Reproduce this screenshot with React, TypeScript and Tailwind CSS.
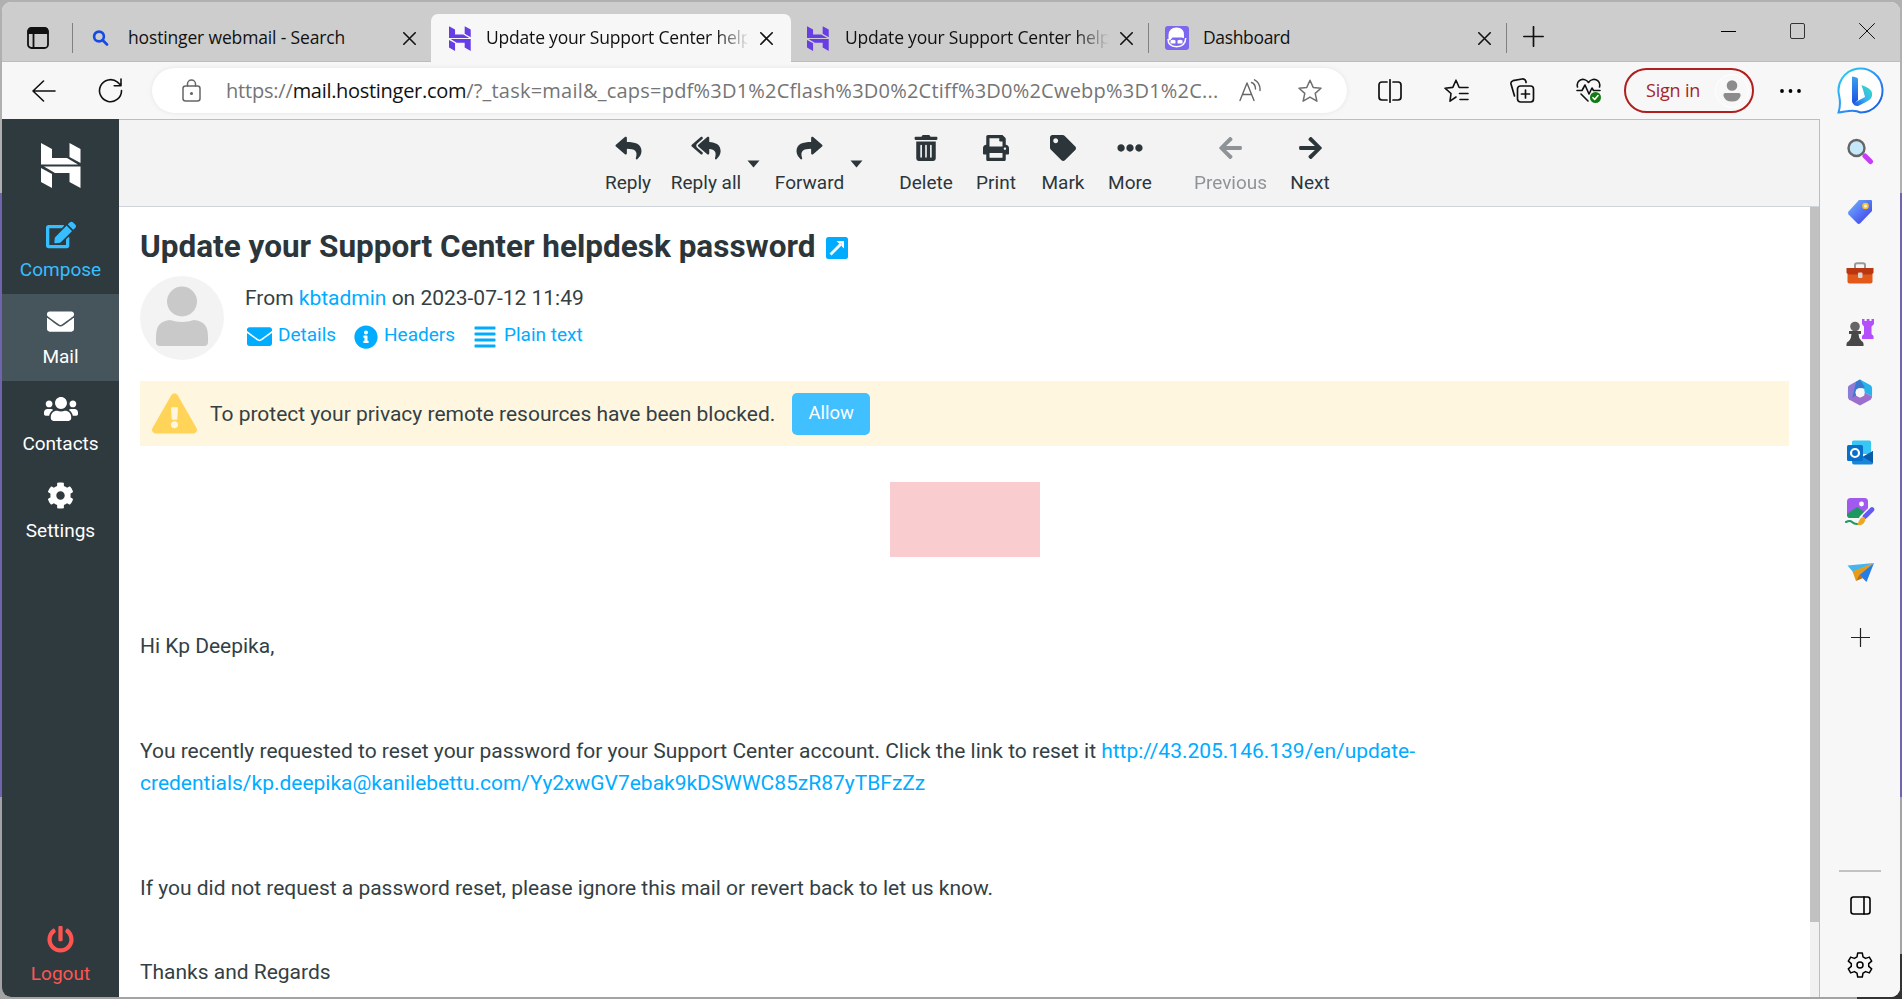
import type { ReactNode } from 'react'
import {
  FaAlignJustify,
  FaArrowLeft,
  FaArrowRight,
  FaCog,
  FaEdit,
  FaEllipsisH,
  FaEnvelope,
  FaExclamationTriangle,
  FaInfoCircle,
  FaPowerOff,
  FaPrint,
  FaReply,
  FaReplyAll,
  FaShare,
  FaTag,
  FaTrashAlt,
  FaUsers,
} from 'react-icons/fa'

type LineProps = { className: string; viewBox: string; width?: number; children: ReactNode }

function Line({ className, viewBox, width = 1.5, children }: LineProps) {
  return (
    <svg
      className={`shrink-0 ${className}`}
      viewBox={viewBox}
      fill="none"
      stroke="currentColor"
      strokeWidth={width}
      strokeLinecap="round"
      strokeLinejoin="round"
    >
      {children}
    </svg>
  )
}

function Hostinger({ className }: { className: string }) {
  return (
    <svg className={`shrink-0 ${className}`} viewBox="0 0 40 45" fill="currentColor">
      <path d="M0 0 11 6V15H26L37 21.5H0Z" />
      <path d="M28.5 0 39.5 6V20L28.5 14Z" />
      <path d="M3 23.5H39.5V45L28.5 39V30H14Z" />
      <path d="M0 25 11 31V45L0 39Z" />
    </svg>
  )
}

function Close() {
  return (
    <Line className="h-[13px] w-[13px]" viewBox="0 0 13 13" width={1.6}>
      <path d="M.8.8 12.2 12.2M12.2.8.8 12.2" />
    </Line>
  )
}

const Separator = ({ className }: { className: string }) => (
  <div className={`h-[30px] w-px shrink-0 bg-[#808080] ${className}`} />
)

function TabStrip() {
  return (
    <div className="flex h-[60px] items-start border-b border-[#bdbdbd] bg-[#cdcdcd] text-[17.5px] leading-6 text-[#111]">
      <Line className="mt-[25px] ml-[25px] h-[22px] w-[22px]" viewBox="0 0 22 22" width={1.8}>
        <rect x="1" y="1" width="20" height="20" rx="3.5" />
        <path d="M1.5 6V4Q1.5 1.5 4 1.5H18Q20.5 1.5 20.5 4V6Z" fill="currentColor" />
        <path d="M6.5 6V21" />
      </Line>
      <Separator className="mt-[21px] ml-[23px]" />
      <div className="flex h-full w-[358px] shrink-0 pr-[15px] pl-[19px]">
        <Line className="mt-[28px] h-[16px] w-[17px] text-[#174ae4]" viewBox="0 0 17 16" width={2.6}>
          <circle cx="7" cy="6.5" r="4.9" />
          <path d="M10.5 10 15 14.5" />
        </Line>
        <span className="mt-[23px] ml-[19px] flex-1 whitespace-nowrap tracking-[-0.15px]">hostinger webmail - Search</span>
        <div className="mt-[30px]">
          <Close />
        </div>
      </div>
      <div className="mt-[11.5px] flex h-[49px] w-[360px] shrink-0 rounded-t-[7px] bg-[#f7f7f7] pr-[18px] pl-[18px]">
        <Hostinger className="mt-[12px] h-[25px] w-[22px] text-[#673de6]" />
        <span className="mt-[11.5px] ml-[15px] w-[264px] overflow-hidden whitespace-nowrap tracking-[-0.2px] [mask-image:linear-gradient(to_right,#000_230px,transparent_264px)]">
          Update your Support Center help
        </span>
        <div className="mt-[18.5px] ml-[13px]">
          <Close />
        </div>
      </div>
      <div className="flex h-full w-[358px] shrink-0 pl-[16px]">
        <Hostinger className="mt-[24px] h-[25px] w-[22px] text-[#673de6]" />
        <span className="mt-[23px] ml-[16px] w-[263px] overflow-hidden whitespace-nowrap tracking-[-0.2px] [mask-image:linear-gradient(to_right,#000_230px,transparent_264px)]">
          Update your Support Center help
        </span>
        <div className="mt-[30px] ml-[12px]">
          <Close />
        </div>
      </div>
      <Separator className="mt-[21px] ml-[-1px]" />
      <div className="flex h-full w-[357px] shrink-0 pr-[15px] pl-[16px]">
        <svg className="mt-[24px] h-[24px] w-[24px] shrink-0" viewBox="0 0 24 24">
          <rect width="24" height="24" rx="3" fill="#7b68ee" />
          <path d="M3.5 14V9Q4 1.5 11.5 1.5T19 9V12L16.5 11.5H7.5L5 14.5Z" fill="#fff" />
          <path d="M3 13Q3 20.5 11.5 20.7Q20.5 20.5 20.7 12" fill="none" stroke="#fff" strokeWidth="1.5" />
          <path d="M5.5 14.5Q8 13 10.5 14.5V17.5H5.5ZM12.5 14.5Q15 13 17.5 14.5V17.5H12.5Z" fill="#fff" />
        </svg>
        <span className="mt-[23px] ml-[14px] flex-1 tracking-[-0.35px]">Dashboard</span>
        <div className="mt-[30px]">
          <Close />
        </div>
      </div>
      <Separator className="mt-[21px]" />
      <Line className="mt-[24px] ml-[16px] h-[21px] w-[21px]" viewBox="0 0 21 21" width={1.7}>
        <path d="M10.5 .8V20.2M.8 10.5H20.2" />
      </Line>
      <div className="ml-auto flex items-center pt-[21px] pr-[25px]">
        <div className="h-px w-[15px] bg-black" />
        <div className="ml-[54px] h-[16px] w-[15px] rounded-[2px] border border-[#333]" />
        <Line className="ml-[54px] h-[16px] w-[16px]" viewBox="0 0 16 16" width={1}>
          <path d="M.5.5 15.5 15.5M15.5.5.5 15.5" />
        </Line>
      </div>
    </div>
  )
}

function BingLogo() {
  return (
    <svg className="h-[48px] w-[48px]" viewBox="0 0 48 48">
      <defs>
        <linearGradient id="ring" x1="0" y1="0" x2="1" y2="1">
          <stop offset="0" stopColor="#29d3f5" />
          <stop offset=".55" stopColor="#2f8ff5" />
          <stop offset="1" stopColor="#1450d8" />
        </linearGradient>
        <linearGradient id="stem" x1="0" y1="0" x2="0" y2="1">
          <stop offset="0" stopColor="#3aa0f0" />
          <stop offset="1" stopColor="#1c50e0" />
        </linearGradient>
        <linearGradient id="bowl" x1="1" y1="0" x2="0" y2="1">
          <stop offset="0" stopColor="#2fe0b8" />
          <stop offset=".5" stopColor="#3ab4f0" />
          <stop offset="1" stopColor="#1c50e0" />
        </linearGradient>
      </defs>
      <path
        d="M1.5 45.5Q4 38 2.200 29A22 22 0 1 1 23.5 45.5C16 41.5 9 45 1.5 45.5Z"
        fill="#fff"
        stroke="url(#ring)"
        strokeWidth="2"
      />
      <path d="M15.5 9.5 19.5 10.5Q21 11 21 12.5V33L16.5 37Q15 36 15 34V10Z" fill="url(#stem)" />
      <path d="M24.5 18Q34 21 35 26Q36 32 29 35L21 39Q18 39.5 15.8 36.5L28 30 26.5 24.5Z" fill="url(#bowl)" />
    </svg>
  )
}

const star = 'M12 1.2 15.2 8.4 23 9.2 17.2 14.4 18.9 22.2 12 18.1 5.1 22.2 6.8 14.4 1 9.2 8.8 8.4Z'

function AddressBar() {
  return (
    <div className="flex h-[57px] items-center bg-[#f7f7f7] text-[#111]">
      <Line className="ml-[30px] h-[22px] w-[24px]" viewBox="0 0 24 22" width={1.6}>
        <path d="M23 11H1M11.5 1 1 11 11.5 21" />
      </Line>
      <Line className="ml-[42px] h-[25px] w-[25px]" viewBox="0 0 25 25" width={1.6}>
        <path d="M23.5 12.5A11 11 0 1 1 19.5 4.2L23 7.5M23 1V7.8H16.2" />
      </Line>
      <div className="ml-[29px] flex h-[45px] w-[1195px] shrink-0 items-center rounded-full bg-white shadow-[0_0_5px_rgba(0,0,0,0.08)]">
        <Line className="ml-[30px] h-[23px] w-[19px] text-[#666]" viewBox="0 0 19 23" width={1.5}>
          <rect x="1" y="7" width="17" height="15" rx="2.5" />
          <path d="M5.5 7V5A4 4 0 0 1 13.5 5V7" />
          <circle cx="9.5" cy="14.5" r=".8" fill="currentColor" />
        </Line>
        <div className="ml-[25px] w-[1000px] whitespace-nowrap text-[20px] leading-7 tracking-[0.22px] text-[#757575]">
          <span className="tracking-[-0.2px]">https://</span>
          <span className="tracking-[-0.3px] text-[#111]">mail.hostinger.com</span>
          /?_task=mail&_caps=pdf%3D1%2Cflash%3D0%2Ctiff%3D0%2Cwebp%3D1%2C...
        </div>
        <Line className="ml-[13px] h-[23px] w-[23px] text-[#666]" viewBox="0 0 23 23" width={1.4}>
          <path d="M1 21.5 8 4 15 21.5M3.5 15.5H12.5M12.5 3.5Q16.5 5 16.5 10M15.5 .8Q21.5 4 21 11.5" />
        </Line>
        <Line className="ml-[36px] h-[24px] w-[24px] text-[#707070]" viewBox="0 0 24 24">
          <path d={star} />
        </Line>
      </div>
      <Line className="ml-[31px] h-[24px] w-[24px]" viewBox="0 0 24 24" width={1.7}>
        <path d="M9 3H4Q1 3 1 6V18Q1 21 4 21H9M15 3H20Q23 3 23 6V18Q23 21 20 21H15M12 .8V23.2" />
      </Line>
      <Line className="ml-[42px] h-[24px] w-[25px]" viewBox="0 0 25 24" width={1.6}>
        <path d="M12 18 6 22.2 7 14.5 1 9.2 8.8 8.4 12 1.2 15.2 8.5H24M15.5 14.5H24M16 20.5H24" />
      </Line>
      <Line className="ml-[41px] h-[25px] w-[25px]" viewBox="0 0 25 25" width={1.7}>
        <rect x="7.5" y="8" width="16" height="16" rx="3" />
        <path d="M15.5 12V20M11.5 16H19.5M4.5 18 1 6Q.5 3.5 3 2.7L12 1Q15 .5 16 3.5V4.5" />
      </Line>
      <Line className="ml-[41px] h-[25px] w-[25px]" viewBox="0 0 25 25" width={1.6}>
        <path d="M1.5 9C0 3 5 1 8 1.5Q11 2 12.5 4.5Q14 2 17 1.5C20 1 25 3 23.5 9M1 12.5H6L9 7 13 16 16 10 17.5 12.5H24M5 16 12 23" />
        <circle cx="19.5" cy="19.5" r="5.5" fill="#107c10" stroke="none" />
        <path d="M17 19.7 18.7 21.5 22 17.5" stroke="#fff" />
      </Line>
      <div className="ml-[23px] flex h-[45px] w-[130px] shrink-0 items-center justify-between rounded-full border-2 border-[#b01e1e] pr-[3px] pl-[20px] text-[18px] text-[#a4262c]">
        <span className="whitespace-nowrap tracking-[-0.2px]">Sign in</span>
        <div className="flex h-[34px] w-[34px] items-center justify-center rounded-full border border-white bg-[#f8f8f8]">
          <svg className="h-[22px] w-[18px]" viewBox="0 0 18 22" fill="#8c8c8c">
            <circle cx="9" cy="5.5" r="5.3" />
            <path d="M2.5 13H15.5Q18 13 17.5 16Q16 21.5 9 21.5T.5 16Q0 13 2.5 13Z" />
          </svg>
        </div>
      </div>
      <svg className="ml-[26px] h-[4px] w-[21px] shrink-0" viewBox="0 0 21 4">
        <circle cx="2" cy="2" r="1.9" />
        <circle cx="10.5" cy="2" r="1.9" />
        <circle cx="19" cy="2" r="1.9" />
      </svg>
      <div className="ml-auto pr-[15px]">
        <BingLogo />
      </div>
    </div>
  )
}

const navItem = 'flex h-[87px] flex-col items-center text-[19px] leading-6'

function AppMenu() {
  return (
    <nav className="flex w-[117px] shrink-0 flex-col bg-[#2f3a3f] font-[Roboto,sans-serif] text-white">
      <div className="flex h-[88px] justify-center pt-[24px]">
        <Hostinger className="h-[45px] w-[40px]" />
      </div>
      <div className={`${navItem} text-[#37beff]`}>
        <FaEdit className="mt-[14px] h-[28px] w-[30px]" />
        <span className="mt-[9px]">Compose</span>
      </div>
      <div className={`${navItem} bg-[#46545b]`}>
        <FaEnvelope className="mt-[14px] h-[27px] w-[27px]" />
        <span className="mt-[10px]">Mail</span>
      </div>
      <div className={navItem}>
        <FaUsers className="mt-[11px] h-[34px] w-[34px]" />
        <span className="mt-[6px]">Contacts</span>
      </div>
      <div className={navItem}>
        <FaCog className="mt-[14px] h-[27px] w-[27px]" />
        <span className="mt-[10px]">Settings</span>
      </div>
      <div className={`${navItem} mt-auto text-[#ff5552]`}>
        <FaPowerOff className="mt-[16px] h-[27px] w-[27px]" />
        <span className="mt-[9px]">Logout</span>
      </div>
    </nav>
  )
}

const actions = [
  { label: 'Reply', icon: <FaReply className="h-[26px] w-[27px]" />, box: 'w-[46px]' },
  { label: 'Reply all', icon: <FaReplyAll className="h-[26px] w-[30px]" />, box: 'ml-[20px] w-[70px]', menu: true },
  { label: 'Forward', icon: <FaShare className="h-[26px] w-[27px]" />, box: 'ml-[15px] w-[69px]', menu: true },
  { label: 'Delete', icon: <FaTrashAlt className="h-[26px] w-[26px]" />, box: 'ml-[36px] w-[54px]' },
  { label: 'Print', icon: <FaPrint className="h-[26px] w-[26px]" />, box: 'ml-[23px] w-[40px]' },
  { label: 'Mark', icon: <FaTag className="h-[26px] w-[26px]" />, box: 'ml-[26px] w-[42px]' },
  { label: 'More', icon: <FaEllipsisH className="h-[26px] w-[26px]" />, box: 'ml-[24px] w-[44px]' },
  { label: 'Previous', icon: <FaArrowLeft className="h-[26px] w-[25px]" />, box: 'ml-[42px] w-[73px] opacity-50' },
  { label: 'Next', icon: <FaArrowRight className="h-[26px] w-[25px]" />, box: 'ml-[23px] w-[40px]' },
]

function MailToolbar() {
  return (
    <div className="flex h-[87px] shrink-0 border-b border-[#ced4da] bg-[#f3f3f3] pl-[486px] text-[19px] leading-6 text-[#2c363a]">
      {actions.map((action) => (
        <div key={action.label} className="flex">
          <div className={`flex flex-col items-center pt-[15px] whitespace-nowrap ${action.box}`}>
            {action.icon}
            <span className="mt-[10px]">{action.label}</span>
          </div>
          {action.menu && (
            <svg className="mt-[40px] ml-[6px] h-[8px] w-[13px]" viewBox="0 0 13 8" fill="currentColor">
              <path d="M.5.5H12.5L6.5 7.5Z" />
            </svg>
          )}
        </div>
      ))}
    </div>
  )
}

function Message() {
  return (
    <article className="w-[1670px] pl-[21px] text-[21px] leading-8 tracking-[-0.01px] text-[#343f44]">
      <div className="flex items-center pt-[20px]">
        <h1 className="text-[31.5px] leading-[40px] font-bold tracking-normal whitespace-nowrap text-[#2c363a]">
          Update your Support Center helpdesk password
        </h1>
        <svg className="mt-[2px] ml-[11px] h-[22px] w-[22px]" viewBox="0 0 22 22">
          <rect width="22" height="22" rx="2.5" fill="#00acff" />
          <path d="M4.5 17.5 15 7" fill="none" stroke="#fff" strokeWidth="2.8" />
          <path d="M10.5 4H18V11.5L15.5 9V6.5H13Z" fill="#fff" />
        </svg>
      </div>
      <div className="mt-[9px] flex">
        <svg className="h-[84px] w-[84px]" viewBox="0 0 84 84">
          <circle cx="42" cy="42" r="42" fill="#f3f3f3" />
          <circle cx="42" cy="25.5" r="15" fill="#c9c9c9" />
          <path d="M16 66V60Q16 45 30 44Q42 48 54 44Q68 45 68 60V66Q68 70 64 70H20Q16 70 16 66Z" fill="#c9c9c9" />
        </svg>
        <div className="pt-[6px] pl-[21px]">
          <p>
            From <span className="text-[#00acff]">kbtadmin</span> on 2023-07-12 11:49
          </p>
          <div className="mt-[6px] flex items-center text-[19px] leading-[30px] text-[#00acff]">
            <FaEnvelope className="mt-[3px] ml-[2px] h-[25px] w-[25px]" />
            <span className="ml-[6px]">Details</span>
            <FaInfoCircle className="mt-[3px] ml-[18px] h-[24px] w-[24px]" />
            <span className="ml-[6px]">Headers</span>
            <FaAlignJustify className="mt-[3px] ml-[19px] h-[24px] w-[22px]" />
            <span className="ml-[8px]">Plain text</span>
          </div>
        </div>
      </div>
      <div className="mt-[21px] flex h-[65px] items-center bg-[#fff6df] pl-[12px]">
        <FaExclamationTriangle className="h-[45px] w-[45px] text-[#ffd458]" />
        <span className="ml-[13px] whitespace-nowrap">To protect your privacy remote resources have been blocked.</span>
        <button className="ml-[17px] h-[42px] w-[78px] rounded-[5px] bg-[#41c0ff] pb-[2px] text-[18.5px] leading-6 text-white">
          Allow
        </button>
      </div>
      <div className="mx-auto mt-[36px] h-[75px] w-[150px] bg-[#f9cccf]" />
      <p className="mt-[73px]">Hi Kp Deepika,</p>
      <p className="mt-[73px] w-[1300px]">
        You recently requested to reset your password for your Support Center account. Click the link to reset it{' '}
        <span className="text-[#00acff]">
          http://43.205.146.139/en/update-
          <br />
          credentials/kp.deepika@kanilebettu.com/Yy2xwGV7ebak9kDSWWC85zR87yTBFzZz
        </span>
      </p>
      <p className="mt-[73px]">If you did not request a password reset, please ignore this mail or revert back to let us know.</p>
      <p className="mt-[52px]">Thanks and Regards</p>
    </article>
  )
}

function EdgeSidebar() {
  return (
    <aside className="flex w-[80px] shrink-0 flex-col items-center bg-[#f7f7f7] pt-[18px]">
      <svg className="h-[28px] w-[28px]" viewBox="0 0 28 28">
        <path d="M19 19 24.5 24.5" stroke="#c83cf5" strokeWidth="5" strokeLinecap="round" />
        <circle cx="10.5" cy="11" r="8" fill="#c5e8fa" stroke="#666" strokeWidth="2.4" />
      </svg>
      <svg className="mt-[34px] h-[26px] w-[26px]" viewBox="0 0 26 26">
        <defs>
          <linearGradient id="tag" x1="0" y1="0" x2="1" y2="1">
            <stop offset="0" stopColor="#70b8ff" />
            <stop offset="1" stopColor="#3d35e8" />
          </linearGradient>
        </defs>
        <path d="M12 1H24Q25 1 25 2V12L13 24.5Q11.5 25.5 10 24L1.5 15.5Q.5 14 1.5 12.5Z" fill="url(#tag)" />
        <circle cx="18.5" cy="7" r="2.4" fill="#f4f4ff" stroke="#ffc21a" strokeWidth="1.8" />
      </svg>
      <svg className="mt-[37px] h-[22px] w-[28px]" viewBox="0 0 28 22">
        <path d="M9 6V3Q9 1.2 11 1.2H17Q19 1.2 19 3V6" fill="none" stroke="#999" strokeWidth="2" />
        <rect x="1.5" y="8" width="25" height="13.5" rx="2" fill="#e2591a" />
        <path d="M.5 6H27.5V11L25 12.5H3L.5 11Z" fill="#b93611" />
        <rect x="12" y="10.5" width="4.5" height="5.5" rx="1" fill="#d6d6d6" />
      </svg>
      <svg className="mt-[34px] h-[29px] w-[28px]" viewBox="0 0 28 29">
        <path d="M16 1H18.5V3H20.7V1H23.5V3H25.5V1H28V6L25.5 8.5V16L27.5 18V21H16V18L18 16V8.5L16 6Z" fill="#b44dfa" />
        <circle cx="9" cy="8.5" r="4.8" fill="#666" />
        <path d="M3 13H15V16H12.5Q12.5 20 15.5 23Q18 24 17.5 28H.5Q0 24 3 23Q5.5 20 5.5 16H3Z" fill="#484848" />
      </svg>
      <svg className="mt-[32px] h-[27px] w-[26px]" viewBox="0 0 26 28">
        <path d="M13 .5 24 6.5Q25.5 7.5 25.5 9.5V18L17.5 14V10.5L9 6V3Z" fill="#28b4ea" />
        <path d="M9 2.7V11.5L8.5 12V18.5L2 22 .5 19.5V9Q.5 7.5 2 6.5Z" fill="#8d7bd6" />
        <path d="M9 2.7 13 .5 18 8.5 9 12V17L5 20Z" fill="#3b78d0" />
        <path d="M2 21.5 9 17 13 19.5 17.5 17V14L25.5 18Q25.5 20.5 24 21.5L13 27.5Z" fill="#9c6fce" />
        <circle cx="13" cy="14" r="4.7" fill="#f7f7f7" />
      </svg>
      <svg className="mt-[34px] h-[25px] w-[26px]" viewBox="0 0 26 25">
        <path d="M5 2Q5 .5 6.5 .5H22.5Q24 .5 24 2V14H5Z" fill="#38c6f4" />
        <path d="M5 12 15 17 26 11V23Q26 24.5 24 24.5H7Q5 24.5 5 22Z" fill="#1686dc" />
        <path d="M16 17 26 23V11Z" fill="#0a5ba8" />
        <rect y="5" width="16" height="16" rx="1.5" fill="#0870ca" />
        <circle cx="8" cy="13" r="4" fill="none" stroke="#fff" strokeWidth="2.2" />
      </svg>
      <svg className="mt-[32px] h-[29px] w-[30px]" viewBox="0 0 30 29">
        <rect x="2" y="1" width="21" height="20" rx="3.5" fill="#a259ee" />
        <path d="M2 17 12 10 21 16 16 21H5Q2 21 2 17Z" fill="#1d9960" />
        <circle cx="16.5" cy="7" r="2.4" fill="#fff" />
        <path d="M18 21.5 27 12.5" stroke="#f7f7f7" strokeWidth="7.5" strokeLinecap="round" />
        <path d="M20 19.5 27 12.5" stroke="#6459f5" strokeWidth="4.6" strokeLinecap="round" />
        <path d="M12.5 28Q15 19 19 20Q22 23 18 27Q15 29 12.5 28Z" fill="#eba825" />
        <path d="M1 25Q5 23 7 25T12 27" fill="none" stroke="#1d9960" strokeWidth="2" strokeLinecap="round" />
      </svg>
      <svg className="mt-[36px] h-[22px] w-[27px]" viewBox="0 0 27 22">
        <path d="M.5 3.5 27 1 6 10Z" fill="#45b5ee" />
        <path d="M27 1 5.5 9.5 9 19 13 14Z" fill="#e99b16" />
        <path d="M27 1 12.5 13 19.5 20Z" fill="#277de8" />
        <path d="M12.5 13 9 19 16 16Z" fill="#bd6e10" />
      </svg>
      <Line className="mt-[44px] h-[19px] w-[19px] text-[#222]" viewBox="0 0 19 19" width={1.2}>
        <path d="M9.5 .5V18.5M.5 9.5H18.5" />
      </Line>
      <div className="mt-auto h-[2px] w-[42px] bg-[#c2c2c2]" />
      <Line className="mt-[24px] h-[19px] w-[21px] text-black" viewBox="0 0 21 19" width={1.6}>
        <rect x="1" y="1" width="19" height="17" rx="2.5" />
        <path d="M14 1V18" />
      </Line>
      <Line className="mt-[37px] mb-[19px] h-[26px] w-[26px] text-black" viewBox="0 0 26 26" width={1.5}>
        <path d="M10.7 1H15.3L16 4.9 18.6 6.4 22.3 5.1 24.7 9.1 21.7 11.6V14.4L24.7 16.9 22.3 20.9 18.6 19.6 16 21.1 15.3 25H10.7L10 21.1 7.4 19.6 3.7 20.9 1.3 16.9 4.3 14.4V11.6L1.3 9.1 3.7 5.1 7.4 6.4 10 4.9Z" />
        <circle cx="13" cy="13" r="3" />
      </Line>
    </aside>
  )
}

export default function App() {
  return (
    <div className="h-[999px] w-[1902px] overflow-hidden bg-[linear-gradient(#333,#333),linear-gradient(to_bottom,#b0b0b0_193px,#6f64ad_193px,#6f64ad_797px,#a3a3a3_797px)] bg-[length:45px_45px,100%_100%] bg-[position:100%_100%,0_0] bg-no-repeat p-[2px]">
      <div className="flex h-[995px] flex-col overflow-hidden rounded-[9px] bg-[#f7f7f7] font-['Open_Sans',sans-serif]">
        <TabStrip />
        <AddressBar />
        <div className="flex min-h-0 flex-1">
          <AppMenu />
          <main className="flex min-w-0 flex-1 flex-col border-t border-r border-[#bdbdbd] bg-white font-[Roboto,sans-serif]">
            <MailToolbar />
            <div className="flex min-h-0 flex-1 justify-between overflow-hidden">
              <Message />
              <div className="w-[9px] shrink-0 bg-[#f1f1f1]">
                <div className="h-[715px] bg-[#c1c1c1]" />
              </div>
            </div>
          </main>
          <EdgeSidebar />
        </div>
      </div>
    </div>
  )
}
